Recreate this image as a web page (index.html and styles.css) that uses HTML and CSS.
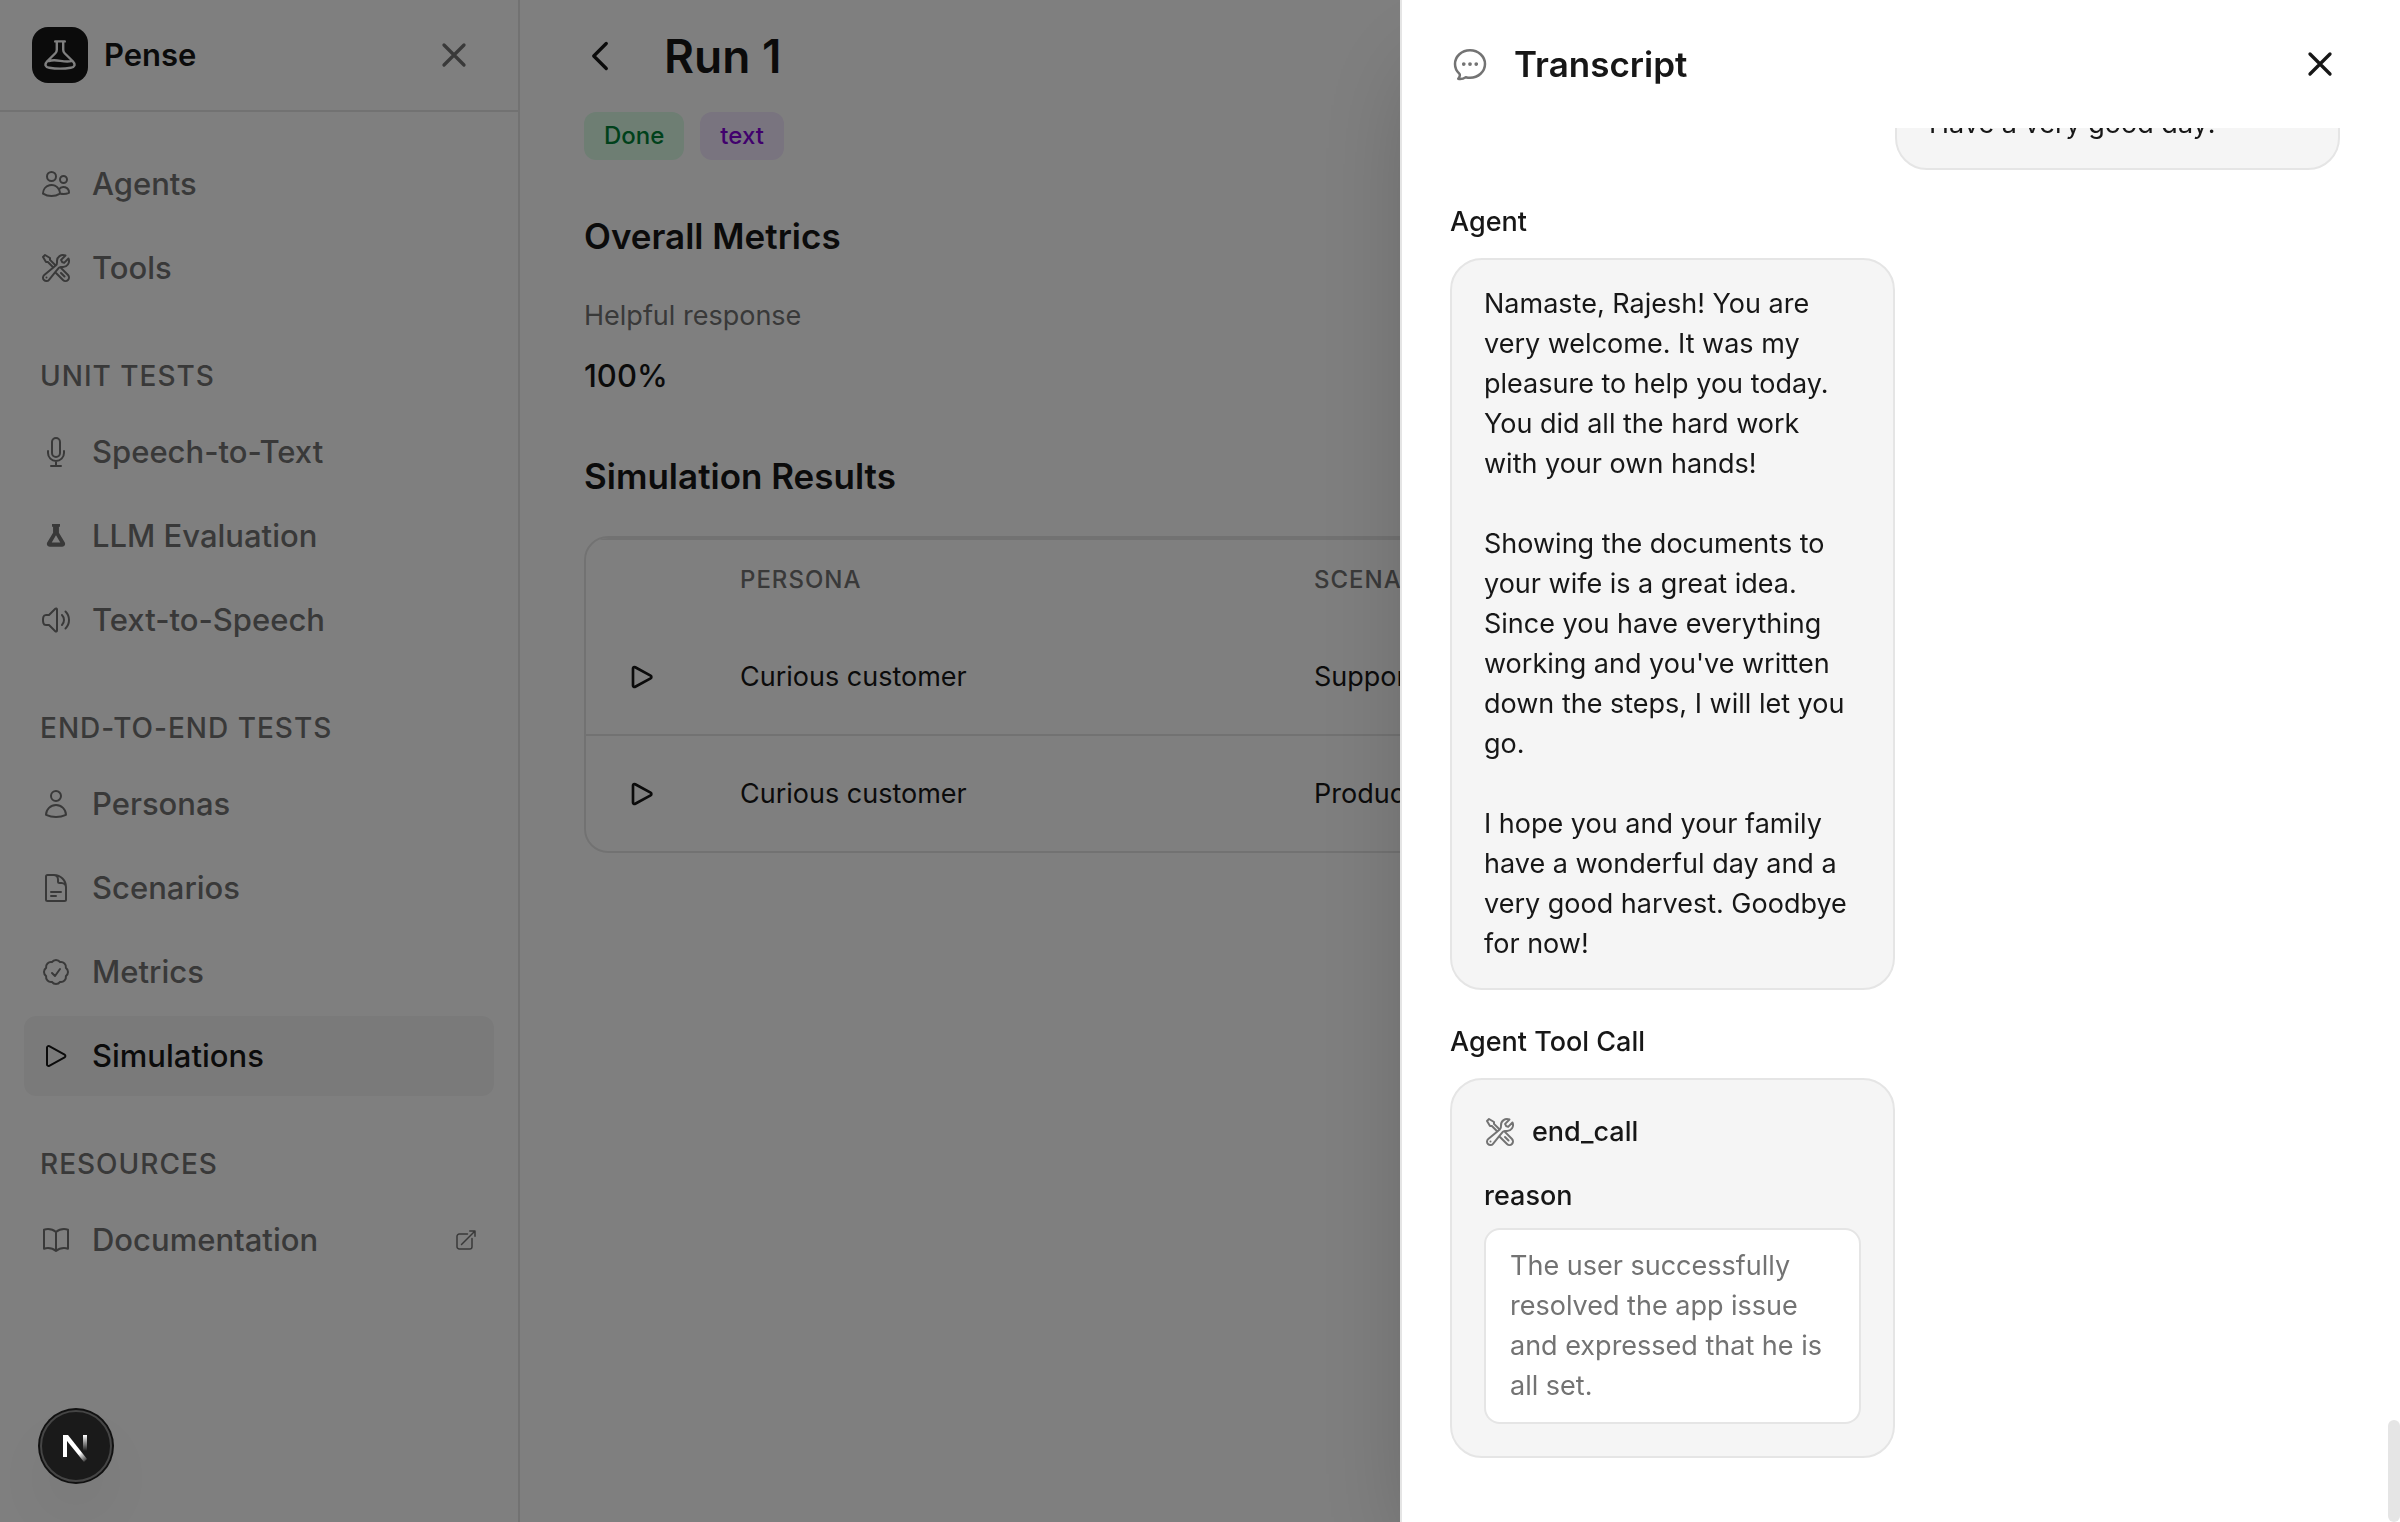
FILE: index.html
```
<!DOCTYPE html>
<html lang="en">
<head>
  <meta charset="UTF-8" />
  <meta name="viewport" content="width=device-width, initial-scale=1.0"/>
  <title>Pense - Run 1</title>
  <link rel="stylesheet" href="styles.css">
</head>
<body>
  <!-- Shared icons -->
  <svg class="sprite" aria-hidden="true">
    <symbol id="icon-close" viewBox="0 0 24 24"><path d="M6 18 18 6M6 6l12 12"/></symbol>
    <symbol id="icon-play" viewBox="0 0 24 24"><path d="M5.25 5.653c0-.856.917-1.398 1.667-.986l11.54 6.347a1.125 1.125 0 0 1 0 1.972l-11.54 6.347a1.125 1.125 0 0 1-1.667-.986V5.653Z"/></symbol>
    <symbol id="icon-tools" viewBox="0 0 24 24"><path d="M11.42 15.17 17.25 21A2.652 2.652 0 0 0 21 17.25l-5.877-5.877M11.42 15.17l2.496-3.03c.317-.384.74-.626 1.208-.766M11.42 15.17l-4.655 5.653a2.548 2.548 0 1 1-3.586-3.586l6.837-5.63m5.108-.233c.55-.164 1.163-.188 1.743-.14a4.5 4.5 0 0 0 4.486-6.336l-3.276 3.277a3.004 3.004 0 0 1-2.25-2.25l3.276-3.276a4.5 4.5 0 0 0-6.336 4.486c.091 1.076-.071 2.264-.904 2.95l-.102.085m-1.745 1.437L5.909 7.5H4.5L2.25 3.75l1.5-1.5L7.5 4.5v1.409l4.26 4.26m-1.745 1.437 1.745-1.437m6.615 8.206L15.75 15.75M4.867 19.125h.008v.008h-.008v-.008Z"/></symbol>
  </svg>

  <div class="app">
    <aside class="sidebar">
      <div class="sidebar-header">
        <div class="logo">
          <svg class="icon" viewBox="2 2 20 20"><path d="M9 3.5h6M10 3.5v5.2c0 .9-.3 1.6-.9 2.2L4 15.9c-2 2.2-1 3.7 1.300 4.100 4.400.7 9 .7 13.400 0 2.300-.4 3.300-1.900 1.300-4.100L14.900 10.900c-.6-.6-.9-1.300-.9-2.200V3.500M5 15.800c4.500-1.800 9 1.200 14 0"/></svg>
        </div>
        <span class="brand">Pense</span>
        <button class="icon-btn muted" aria-label="Close sidebar"><svg class="icon icon-lg bold"><use href="#icon-close"/></svg></button>
      </div>

      <nav class="nav">
        <div class="nav-group">
          <a class="nav-item" href="#agents">
            <svg class="icon" viewBox="0 0 24 24"><path d="M15 19.128a9.38 9.38 0 0 0 2.625.372 9.337 9.337 0 0 0 4.121-.952 4.125 4.125 0 0 0-7.533-2.493M15 19.128v-.003c0-1.113-.285-2.16-.786-3.07M15 19.128v.106A12.318 12.318 0 0 1 8.624 21c-2.331 0-4.512-.645-6.374-1.766l-.001-.109a6.375 6.375 0 0 1 11.964-3.07M12 6.375a3.375 3.375 0 1 1-6.75 0 3.375 3.375 0 0 1 6.75 0Zm8.25 2.25a2.625 2.625 0 1 1-5.25 0 2.625 2.625 0 0 1 5.25 0Z"/></svg>
            Agents
          </a>
          <a class="nav-item" href="#tools">
            <svg class="icon"><use href="#icon-tools"/></svg>
            Tools
          </a>
        </div>

        <h3 class="nav-label">Unit Tests</h3>
        <div class="nav-group">
          <a class="nav-item" href="#stt">
            <svg class="icon" viewBox="0 0 24 24"><path d="M12 18.75a6 6 0 0 0 6-6v-1.5m-6 7.5a6 6 0 0 1-6-6v-1.5m6 7.5v3.75m-3.75 0h7.5M12 15.75a3 3 0 0 1-3-3V4.5a3 3 0 1 1 6 0v8.25a3 3 0 0 1-3 3Z"/></svg>
            Speech-to-Text
          </a>
          <a class="nav-item" href="#llm">
            <svg class="icon filled" viewBox="0 0 24 24"><path fill-rule="evenodd" d="M9 3h6v2h-.8v4.6l4.300 7.100c.9 1.600 0 3.300-1.800 3.300H7.300c-1.800 0-2.700-1.700-1.800-3.300l4.300-7.100V5H9ZM12 11.500l-3.200 5.300h6.400Z"/></svg>
            LLM Evaluation
          </a>
          <a class="nav-item" href="#tts">
            <svg class="icon" viewBox="0 0 24 24"><path d="M19.114 5.636a9 9 0 0 1 0 12.728M16.463 8.288a5.25 5.25 0 0 1 0 7.424M6.75 8.25l4.72-4.72a.75.75 0 0 1 1.28.53v15.88a.75.75 0 0 1-1.28.53l-4.72-4.72H4.51c-.88 0-1.704-.507-1.938-1.354A9.009 9.009 0 0 1 2.25 12c0-.83.112-1.633.322-2.396C2.806 8.756 3.63 8.25 4.51 8.25H6.75Z"/></svg>
            Text-to-Speech
          </a>
        </div>

        <h3 class="nav-label">End-to-End Tests</h3>
        <div class="nav-group">
          <a class="nav-item" href="#personas">
            <svg class="icon" viewBox="0 0 24 24"><path d="M15.75 6a3.75 3.75 0 1 1-7.5 0 3.75 3.75 0 0 1 7.5 0ZM4.501 20.118a7.5 7.5 0 0 1 14.998 0A17.933 17.933 0 0 1 12 21.75c-2.676 0-5.216-.584-7.499-1.632Z"/></svg>
            Personas
          </a>
          <a class="nav-item" href="#scenarios">
            <svg class="icon" viewBox="0 0 24 24"><path d="M19.5 14.25v-2.625a3.375 3.375 0 0 0-3.375-3.375h-1.5A1.125 1.125 0 0 1 13.5 7.125v-1.5a3.375 3.375 0 0 0-3.375-3.375H8.25m0 12.75h7.5m-7.5 3H12M10.5 2.25H5.625c-.621 0-1.125.504-1.125 1.125v17.25c0 .621.504 1.125 1.125 1.125h12.75c.621 0 1.125-.504 1.125-1.125V11.25a9 9 0 0 0-9-9Z"/></svg>
            Scenarios
          </a>
          <a class="nav-item" href="#metrics">
            <svg class="icon" viewBox="0 0 24 24"><path d="M9 12.75 11.25 15 15 9.75M21 12c0 1.268-.63 2.39-1.593 3.068a3.745 3.745 0 0 1-1.043 3.296 3.745 3.745 0 0 1-3.296 1.043A3.745 3.745 0 0 1 12 21c-1.268 0-2.39-.63-3.068-1.593a3.746 3.746 0 0 1-3.296-1.043 3.745 3.745 0 0 1-1.043-3.296A3.745 3.745 0 0 1 3 12c0-1.268.63-2.39 1.593-3.068a3.745 3.745 0 0 1 1.043-3.296 3.746 3.746 0 0 1 3.296-1.043A3.746 3.746 0 0 1 12 3c1.268 0 2.39.63 3.068 1.593a3.746 3.746 0 0 1 3.296 1.043 3.746 3.746 0 0 1 1.043 3.296A3.745 3.745 0 0 1 21 12Z"/></svg>
            Metrics
          </a>
          <a class="nav-item active" href="#simulations">
            <svg class="icon"><use href="#icon-play"/></svg>
            Simulations
          </a>
        </div>

        <h3 class="nav-label">Resources</h3>
        <div class="nav-group">
          <a class="nav-item" href="#docs">
            <svg class="icon" viewBox="0 0 24 24"><path d="M12 6.042A8.967 8.967 0 0 0 6 3.75c-1.052 0-2.062.18-3 .512v14.25A8.987 8.987 0 0 1 6 18c2.305 0 4.408.867 6 2.292m0-14.25a8.966 8.966 0 0 1 6-2.292c1.052 0 2.062.18 3 .512v14.25A8.987 8.987 0 0 0 18 18a8.967 8.967 0 0 0-6 2.292m0-14.25v14.25"/></svg>
            Documentation
            <svg class="icon icon-sm external" viewBox="0 0 24 24"><path d="M13.5 6H5.25A2.25 2.25 0 0 0 3 8.25v10.5A2.25 2.25 0 0 0 5.25 21h10.5A2.25 2.25 0 0 0 18 18.75V10.5m-10.5 6L21 3m0 0h-5.25M21 3v5.25"/></svg>
          </a>
        </div>
      </nav>
    </aside>

    <main class="content">
      <header class="page-header">
        <button class="icon-btn back" aria-label="Back"><svg class="icon icon-lg bold" viewBox="0 0 24 24"><path d="M15.75 19.5 8.25 12l7.5-7.5"/></svg></button>
        <h1>Run 1</h1>
      </header>
      <div class="badges">
        <span class="badge badge-green">Done</span>
        <span class="badge badge-purple">text</span>
      </div>

      <section class="section">
        <h2>Overall Metrics</h2>
        <p class="metric-name">Helpful response</p>
        <p class="metric-value">100%</p>
      </section>

      <section class="section">
        <h2>Simulation Results</h2>
        <div class="table-wrap">
          <table class="results">
            <thead>
              <tr><th class="play-col"></th><th class="persona-col">Persona</th><th>Scenario</th></tr>
            </thead>
            <tbody>
              <tr>
                <td class="play-col"><button class="play-btn" aria-label="Play"><svg class="icon bold"><use href="#icon-play"/></svg></button></td>
                <td>Curious customer</td>
                <td>Support</td>
              </tr>
              <tr>
                <td class="play-col"><button class="play-btn" aria-label="Play"><svg class="icon bold"><use href="#icon-play"/></svg></button></td>
                <td>Curious customer</td>
                <td>Product</td>
              </tr>
            </tbody>
          </table>
        </div>
      </section>
    </main>
  </div>

  <div class="overlay"></div>

  <aside class="drawer">
    <header class="drawer-header">
      <svg class="icon icon-lg muted" viewBox="0 0 24 24"><path d="M8.625 12a.375.375 0 1 1-.75 0 .375.375 0 0 1 .75 0Zm0 0H8.25m4.125 0a.375.375 0 1 1-.75 0 .375.375 0 0 1 .75 0Zm0 0H12m4.125 0a.375.375 0 1 1-.75 0 .375.375 0 0 1 .75 0Zm0 0h-.375M21 12c0 4.556-4.03 8.25-9 8.25a9.764 9.764 0 0 1-2.555-.337A5.972 5.972 0 0 1 5.41 20.97a5.969 5.969 0 0 1-.474-.065 4.48 4.48 0 0 0 .978-2.025c.09-.457-.133-.901-.467-1.226C3.93 16.178 3 14.189 3 12c0-4.556 4.03-8.25 9-8.25s9 3.694 9 8.25Z"/></svg>
      <h2>Transcript</h2>
      <button class="icon-btn" aria-label="Close transcript"><svg class="icon icon-lg bold"><use href="#icon-close"/></svg></button>
    </header>

    <div class="messages">
      <div class="message-list">
        <div class="message user">
          <div class="bubble">Have a very good day!</div>
        </div>
        <div class="message">
          <h3 class="sender">Agent</h3>
          <div class="bubble">
            <p>Namaste, Rajesh! You are very welcome. It was my pleasure to help you today. You did all the hard work with your own hands!</p>
            <p>Showing the documents to your wife is a great idea. Since you have everything working and you've written down the steps, I will let you go.</p>
            <p>I hope you and your family have a wonderful day and a very good harvest. Goodbye for now!</p>
          </div>
        </div>
        <div class="message">
          <h3 class="sender">Agent Tool Call</h3>
          <div class="bubble tool-call">
            <div class="tool-name">
              <svg class="icon muted"><use href="#icon-tools"/></svg>
              end_call
            </div>
            <div class="arg-name">reason</div>
            <div class="arg-value">The user successfully resolved the app issue and expressed that he is all set.</div>
          </div>
        </div>
      </div>
      <div class="scroll-thumb"></div>
    </div>
  </aside>

  <button class="dev-badge" aria-label="Open dev tools">
    <svg viewBox="0 0 76 76">
      <defs>
        <linearGradient id="fade-diag" gradientUnits="userSpaceOnUse" x1="42" y1="45" x2="49" y2="54">
          <stop offset="0" stop-color="#fff"/>
          <stop offset="1" stop-color="#fff" stop-opacity="0"/>
        </linearGradient>
        <linearGradient id="fade-bar" x1="0" y1="0" x2="0" y2="1">
          <stop offset="0" stop-color="#fff"/>
          <stop offset="1" stop-color="#fff" stop-opacity="0"/>
        </linearGradient>
      </defs>
      <circle cx="38" cy="38" r="35" fill="#1a1a1a" stroke="#454545" stroke-width="2"/>
      <rect x="25" y="27" width="4" height="22" fill="#fff"/>
      <path d="M25 27h5l19 24-3 3-21-26Z" fill="url(#fade-diag)"/>
      <rect x="45" y="27" width="4" height="16" fill="url(#fade-bar)"/>
    </svg>
  </button>
</body>
</html>
```

FILE: styles.css
```
* { margin: 0; padding: 0; box-sizing: border-box; }

body {
  height: 100vh;
  overflow: hidden;
  background: #fff;
  color: #171717;
  font-family: 'Inter', sans-serif;
  font-size: 27px;
  line-height: 40px;
}

button {
  border: none;
  background: none;
  color: inherit;
  font: inherit;
  cursor: pointer;
}

a {
  color: inherit;
  text-decoration: none;
}

/* Icons */
.sprite {
  position: absolute;
  width: 0;
  height: 0;
}

.icon {
  width: 32px;
  height: 32px;
  flex-shrink: 0;
  fill: none;
  stroke: currentColor;
  stroke-width: 1.5;
  stroke-linecap: round;
  stroke-linejoin: round;
}

.icon-lg { width: 40px; height: 40px; }
.icon-sm { width: 24px; height: 24px; }
.icon.bold { stroke-width: 2; }
.icon.filled { fill: currentColor; stroke: none; }
.muted { color: #737373; }

.icon-btn {
  display: flex;
  align-items: center;
  justify-content: center;
  width: 64px;
  height: 64px;
}

/* Layout */
.app {
  display: flex;
  height: 100%;
}

.sidebar {
  width: 520px;
  flex-shrink: 0;
  border-right: 2px solid #e5e5e5;
}

.sidebar-header {
  display: flex;
  align-items: center;
  height: 112px;
  padding: 0 32px;
  border-bottom: 2px solid #e5e5e5;
}

.logo {
  display: flex;
  align-items: center;
  justify-content: center;
  width: 56px;
  height: 56px;
  margin-right: 16px;
  border-radius: 16px;
  background: #171717;
  color: #fff;
}

.brand {
  font-size: 31px;
  font-weight: 600;
}

.sidebar-header .icon-btn,
.drawer-header .icon-btn {
  margin-left: auto;
}

.nav { padding: 32px 24px; }

.nav-group {
  display: flex;
  flex-direction: column;
  gap: 4px;
}

.nav-item {
  display: flex;
  align-items: center;
  gap: 20px;
  height: 80px;
  padding: 0 16px;
  border-radius: 12px;
  color: #737373;
  font-size: 31px;
  font-weight: 500;
}

.nav-item.active {
  background: #f5f5f5;
  color: #171717;
}

.external { margin-left: auto; }

.nav-label {
  margin: 48px 0 16px;
  padding: 0 16px;
  color: #737373;
  font-size: 28px;
  font-weight: 500;
  letter-spacing: 1px;
  text-transform: uppercase;
}

/* Page */
.content {
  flex: 1;
  padding: 24px 64px;
}

.page-header {
  display: flex;
  align-items: center;
  gap: 32px;
  height: 64px;
}

.back { margin-left: -16px; }

h1 {
  font-size: 46px;
  font-weight: 600;
}

h2 {
  font-size: 35px;
  font-weight: 600;
  line-height: 56px;
}

.badges {
  display: flex;
  gap: 16px;
  margin-top: 24px;
}

.badge {
  padding: 4px 20px;
  border-radius: 12px;
  font-size: 24px;
  font-weight: 500;
}

.badge-green { background: #dcfce7; color: #008236; }
.badge-purple { background: #f3e8ff; color: #8200db; }

.section { margin-top: 48px; }

.metric-name {
  margin-top: 32px;
  color: #737373;
}

.metric-value {
  margin-top: 16px;
  font-size: 31px;
  font-weight: 500;
  line-height: 48px;
}

.table-wrap {
  margin-top: 32px;
  border: 2px solid #e5e5e5;
  border-radius: 24px;
  overflow: hidden;
}

.results {
  width: 100%;
  border-collapse: collapse;
  table-layout: fixed;
}

.results th {
  height: 80px;
  padding: 0 32px;
  border-top: 2px solid #e5e5e5;
  color: #737373;
  font-size: 24px;
  font-weight: 500;
  letter-spacing: 1px;
  text-align: left;
  text-transform: uppercase;
}

.results td {
  height: 116px;
  padding: 0 32px;
}

.results tbody tr + tr td { border-top: 2px solid #e5e5e5; }

.results .play-col { width: 122px; }
.results .persona-col { width: 574px; }

.play-btn {
  display: flex;
  padding: 8px;
}

/* Transcript drawer */
.overlay {
  position: fixed;
  inset: 0;
  background: rgba(0, 0, 0, 0.5);
}

.drawer {
  position: fixed;
  top: 0;
  right: 0;
  bottom: 0;
  display: flex;
  flex-direction: column;
  width: 40%;
  min-width: 1000px;
  border-left: 2px solid #e5e5e5;
  background: #fff;
  box-shadow: 0 50px 100px -24px rgba(0, 0, 0, 0.25);
}

.drawer-header {
  display: flex;
  align-items: center;
  gap: 24px;
  height: 128px;
  flex-shrink: 0;
  padding: 0 48px;
}

/* Reversed column keeps the list pinned to the latest message */
.messages {
  position: relative;
  display: flex;
  flex-direction: column-reverse;
  flex: 1;
  min-height: 0;
  overflow: hidden;
}

.message-list {
  display: flex;
  flex-direction: column;
  flex-shrink: 0;
  gap: 32px;
  padding: 48px 60px 64px 48px;
}

.message { width: 50%; }
.message.user { align-self: flex-end; }

.sender {
  margin-bottom: 16px;
  font-size: 27px;
  font-weight: 500;
}

.bubble {
  padding: 24px 36px 24px 32px;
  border: 2px solid #e5e5e5;
  border-radius: 32px;
  background: #f5f5f5;
}

.bubble p + p { margin-top: 40px; }

.bubble.tool-call { padding: 32px; }

.tool-name {
  display: flex;
  align-items: center;
  gap: 16px;
  font-weight: 500;
}

.arg-name {
  margin: 24px 0 12px;
  font-weight: 500;
}

.arg-value {
  padding: 16px 24px;
  border: 2px solid #e5e5e5;
  border-radius: 16px;
  background: #fff;
  color: #737373;
}

.scroll-thumb {
  position: absolute;
  right: 0;
  bottom: 0;
  width: 12px;
  height: 102px;
  border-radius: 6px;
  background: #e5e5e5;
}

.dev-badge {
  position: fixed;
  left: 38px;
  bottom: 38px;
  width: 76px;
  height: 76px;
  border-radius: 50%;
  background: #111;
  box-shadow: 0 32px 64px -16px rgba(0, 0, 0, 0.12);
}

.dev-badge svg { display: block; }
```
